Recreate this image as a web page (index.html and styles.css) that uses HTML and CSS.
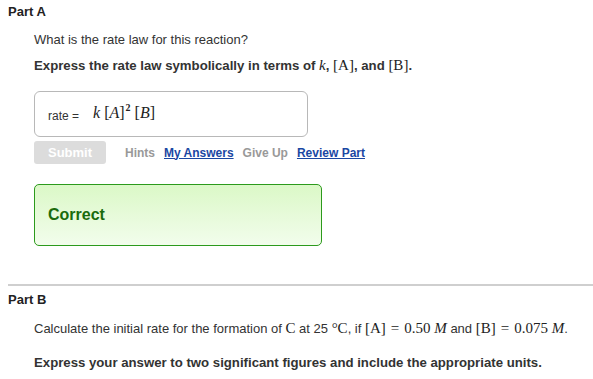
FILE: index.html
```html
<!DOCTYPE html>
<html>
<head>
<meta charset="utf-8">
<link rel="stylesheet" href="styles.css">
</head>
<body>
<div class="part">
  <div class="part-title">Part A</div>
  <div class="part-body">
    <p class="question">What is the rate law for this reaction?</p>
    <p class="instruction">Express the rate law symbolically in terms of <span class="m"><i>k</i></span>, <span class="m">[A]</span>, and <span class="m">[B]</span>.</p>
    <div class="answer-box">
      <span class="label">rate =</span>
      <span class="m answer"><i class="k">k</i><span class="g">[<i>A</i>]<sup>2</sup></span><span class="g">[<i>B</i>]</span></span>
    </div>
    <div class="actions">
      <span class="btn">Submit</span>
      <span class="link muted first">Hints</span>
      <a class="link" href="#">My Answers</a>
      <span class="link muted">Give Up</span>
      <a class="link" href="#">Review Part</a>
    </div>
    <div class="feedback">Correct</div>
  </div>
</div>
<hr class="divider">
<div class="part">
  <div class="part-title b">Part B</div>
  <div class="part-body">
    <p class="question q2">Calculate the initial rate for the formation of <span class="m">C</span> at 25 <span class="m">°C</span>, if <span class="m">[A]<span class="eq">=</span>0.50 <i>M</i></span> and <span class="m">[B]<span class="eq">=</span>0.075 <i>M</i></span>.</p>
    <p class="instruction i2">Express your answer to two significant figures and include the appropriate units.</p>
  </div>
</div>
</body>
</html>
```
FILE: styles.css
```css
html, body {
  margin: 0;
  padding: 0;
  background: #fff;
}
body {
  font-family: "Liberation Sans", Arial, sans-serif;
  color: #333;
  width: 593px;
  overflow: hidden;
}
p { margin: 0; }
.part-title {
  font-weight: bold;
  font-size: 13px;
  line-height: 16px;
  color: #222;
  padding: 4px 8px 0;
}
.part-title.b { padding-top: 6px; }
.part-body {
  padding-left: 34px;
}
.question {
  font-size: 13px;
  line-height: 16px;
  margin-top: 12px;
  white-space: nowrap;
}
.instruction {
  font-size: 13.2px;
  line-height: 16px;
  font-weight: bold;
  margin-top: 10px;
  white-space: nowrap;
}
.m {
  font-family: "Liberation Serif", "Times New Roman", serif;
  font-weight: normal;
  font-size: 15px;
  line-height: 1;
  color: #222;
}
.eq { margin: 0 5px; }
.answer-box {
  margin-top: 17px;
  width: 259px;
  height: 44px;
  border: 1px solid #b8b8b8;
  border-radius: 6px;
  display: flex;
  align-items: center;
  padding-left: 13px;
  font-size: 12px;
}
.label { margin-right: 14px; padding-top: 4px; }
.answer { font-size: 16px; padding-bottom: 2px; }
.answer .k { margin-right: 3px; }
.answer .g { margin-left: 1px; }
.answer .g + .g { margin-left: 4px; }
.answer sup { font-size: 10px; font-weight: bold; vertical-align: 7px; line-height: 0; margin-left: 1px; }
.actions {
  margin-top: 4px;
  display: flex;
  align-items: center;
  height: 23px;
}
.btn {
  width: 72px;
  height: 23px;
  line-height: 23px;
  background: #dcdcdc;
  border-radius: 3px;
  color: #fff;
  font-weight: bold;
  font-size: 13px;
  text-align: center;
}
.link {
  font-size: 12px;
  font-weight: bold;
  margin-left: 9px;
  color: #1a47a3;
  text-decoration: underline;
}
.link.muted { color: #999; text-decoration: none; }
.link.first { margin-left: 19px; }
.feedback {
  margin-top: 20px;
  width: 273px;
  height: 60px;
  border: 1px solid #2c9a1c;
  border-radius: 5px;
  background: linear-gradient(#dbf8c7, #f2fdec);
  display: flex;
  align-items: center;
  padding-left: 13px;
  font-size: 16px;
  font-weight: bold;
  color: #1a6b0c;
}
.divider {
  margin: 38px 0 0 8px;
  border: 0;
  height: 2px;
  background: #cfcfcf;
}
.q2 { margin-top: 13px; }
.i2 { margin-top: 18px; }
```
